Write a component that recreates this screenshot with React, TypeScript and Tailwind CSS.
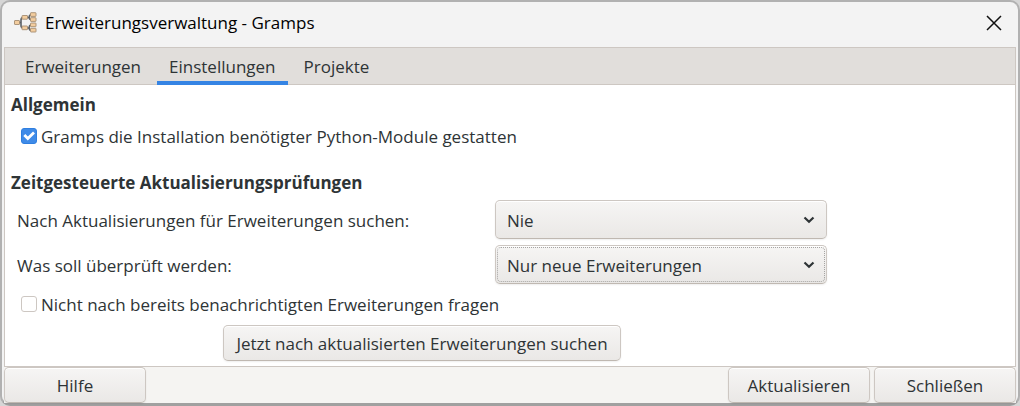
import { useState } from 'react'
import clsx from 'clsx'

const TABS = ['Erweiterungen', 'Einstellungen', 'Projekte']

const INTERVALS = ['Nie', 'Einmal im Monat', 'Einmal in der Woche', 'Einmal am Tag', 'Immer']

const CHECK_TYPES = ['Nur aktualisierte Erweiterungen', 'Nur neue Erweiterungen', 'Neue und aktualisierte Erweiterungen']

const RAISED =
  'rounded-[5px] border border-[#cdc7c2] border-b-[#bfb8b1] bg-linear-to-b from-[#f6f5f4] to-[#eae8e6] shadow-[inset_0_1px_#ffffff,0_1px_2px_rgba(0,0,0,0.07)]'

function GrampsIcon() {
  return (
    <svg width="23" height="22" viewBox="0 0 23 22" aria-hidden="true">
      <g fill="none" stroke="#5b6065" strokeWidth="1.6">
        <path d="M5 10.500h2M9 5.500Q7 5.800 7 8v5.500Q7 15.800 9 16" />
        <path d="M13 5.500h2.200M17 2.800Q15.300 3 15.300 4v2.500Q15.300 7.500 17 7.500" />
        <path d="M13 16h2.200M17 13Q15.300 13.200 15.300 14.500v2.500Q15.300 18.300 17 18.500" />
      </g>
      <g fill="#f3cd9e" stroke="#a58d72" strokeWidth="0.9">
        <rect x="0.500" y="8.500" width="5" height="4" rx="0.500" />
        <rect x="8" y="3.500" width="5.500" height="3.700" rx="0.500" />
        <rect x="8" y="14" width="5.500" height="3.700" rx="0.500" />
        <rect x="16.500" y="0.700" width="5.500" height="3.700" rx="0.500" />
        <rect x="16.500" y="5.700" width="5.500" height="3.700" rx="0.500" />
        <rect x="16.500" y="11" width="5.500" height="3.700" rx="0.500" />
        <rect x="16.500" y="16.300" width="5.500" height="3.700" rx="0.500" />
      </g>
    </svg>
  )
}

function Button({ label, className }: { label: string; className?: string }) {
  return (
    <button type="button" className={clsx(RAISED, 'h-9 px-3 pt-0.5', className)}>
      {label}
    </button>
  )
}

interface CheckProps {
  label: string
  checked: boolean
  onChange: (checked: boolean) => void
}

function Check({ label, checked, onChange }: CheckProps) {
  return (
    <label className="flex h-6 items-center gap-1">
      <span className="relative flex">
        <input
          type="checkbox"
          checked={checked}
          onChange={(e) => onChange(e.target.checked)}
          className="size-4 appearance-none rounded-[3px] border border-[#cdc7c2] bg-white checked:border-[#2f7fe0] checked:bg-[#3f8be8]"
        />
        {checked && (
          <svg className="pointer-events-none absolute inset-0" width="16" height="16" viewBox="0 0 16 16" aria-hidden="true">
            <path d="M3.300 7l3.500 3.500L13 4.500" fill="none" stroke="#fff" strokeWidth="2.800" />
          </svg>
        )}
      </span>
      <span className="pt-0.5">{label}</span>
    </label>
  )
}

interface DropdownProps {
  id: string
  label: string
  value: string
  options: string[]
  focused?: boolean
  onChange: (value: string) => void
}

function Dropdown({ id, label, value, options, focused, onChange }: DropdownProps) {
  return (
    <div className="flex items-center justify-between">
      <label htmlFor={id} className="pt-0.5">{label}</label>
      <div className="relative w-[332px]">
        <select
          id={id}
          value={value}
          onChange={(e) => onChange(e.target.value)}
          className={clsx(RAISED, 'block h-[39px] w-full appearance-none pt-0.5 pr-8 pl-[11px] outline-none')}
        >
          {options.map((o) => (
            <option key={o}>{o}</option>
          ))}
        </select>
        {focused && (
          <span className="pointer-events-none absolute inset-[2px] rounded-[4px] border border-dotted border-[#a5a4a2]" />
        )}
        <svg className="pointer-events-none absolute top-4 right-3" width="12" height="8" viewBox="0 0 12 8" aria-hidden="true">
          <path d="M1.500 1.500L6 5.700l4.500-4.200" fill="none" stroke="#2e3436" strokeWidth="2.200" />
        </svg>
      </div>
    </div>
  )
}

export default function App() {
  const [tab, setTab] = useState('Einstellungen')
  const [allowInstall, setAllowInstall] = useState(true)
  const [skipNotified, setSkipNotified] = useState(false)
  const [interval, setInterval] = useState('Nie')
  const [checkType, setCheckType] = useState('Nur neue Erweiterungen')

  return (
    <div className="bg-[#d6d6d6] font-['Open_Sans','Noto_Sans',sans-serif] text-[17px] leading-6 text-[#2e3436]">
      <div className="flex min-h-screen flex-col rounded-[10px] border-2 border-b-[3px] border-[#b1b1b1] border-b-[#a0a0a0] bg-[#f3f3f3] px-0.5">
        {/* Title bar */}
        <header className="flex h-[45px] items-center gap-2 pr-3 pb-1 pl-[10px] text-black">
          <GrampsIcon />
          <h1 className="flex-1 text-[17px]">Erweiterungsverwaltung - Gramps</h1>
          <button type="button" aria-label="Schließen" className="flex size-5 items-center justify-center">
            <svg width="16" height="16" viewBox="0 0 16 16" aria-hidden="true">
              <path d="M1 1l14 14M15 1L1 15" fill="none" stroke="#111" strokeWidth="1.500" />
            </svg>
          </button>
        </header>

        <main className="flex flex-1 flex-col border border-[#cdc7c2] bg-white">
          <nav role="tablist" className="flex h-[37px] gap-1 border-b border-[#cdc7c2] bg-[#e1dedb] pl-2">
            {TABS.map((t) => (
              <button
                key={t}
                type="button"
                role="tab"
                aria-selected={t === tab}
                onClick={() => setTab(t)}
                className={clsx(
                  'h-[37px] border-b-4 px-3 pt-1',
                  t === tab ? 'border-[#3584e4]' : 'border-transparent',
                )}
              >
                {t}
              </button>
            ))}
          </nav>

          {/* Settings page */}
          <div className="px-1.5 pt-2 pb-1">
            <h2 className="font-bold">Allgemein</h2>
            <div className="mt-[7px] pl-2.5">
              <Check label="Gramps die Installation benötigter Python-Module gestatten" checked={allowInstall} onChange={setAllowInstall} />
            </div>

            <h2 className="mt-[23px] font-bold">Zeitgesteuerte Aktualisierungsprüfungen</h2>
            <div className="mt-[5px] flex max-w-[816px] flex-col gap-1.5 pl-1.5">
              <Dropdown
                id="interval"
                label="Nach Aktualisierungen für Erweiterungen suchen:"
                value={interval}
                options={INTERVALS}
                onChange={setInterval}
              />
              <Dropdown
                id="check-type"
                label="Was soll überprüft werden:"
                value={checkType}
                options={CHECK_TYPES}
                focused
                onChange={setCheckType}
              />
              <div className="pt-0.5 pb-[3px] pl-1">
                <Check label="Nicht nach bereits benachrichtigten Erweiterungen fragen" checked={skipNotified} onChange={setSkipNotified} />
              </div>
              <Button label="Jetzt nach aktualisierten Erweiterungen suchen" className="self-center" />
            </div>
          </div>
        </main>

        <footer className="flex gap-1 bg-[#f5f4f2]">
          <Button label="Hilfe" className="mr-auto w-[142px]" />
          <Button label="Aktualisieren" className="w-[142px]" />
          <Button label="Schließen" className="w-[142px]" />
        </footer>
      </div>
    </div>
  )
}
